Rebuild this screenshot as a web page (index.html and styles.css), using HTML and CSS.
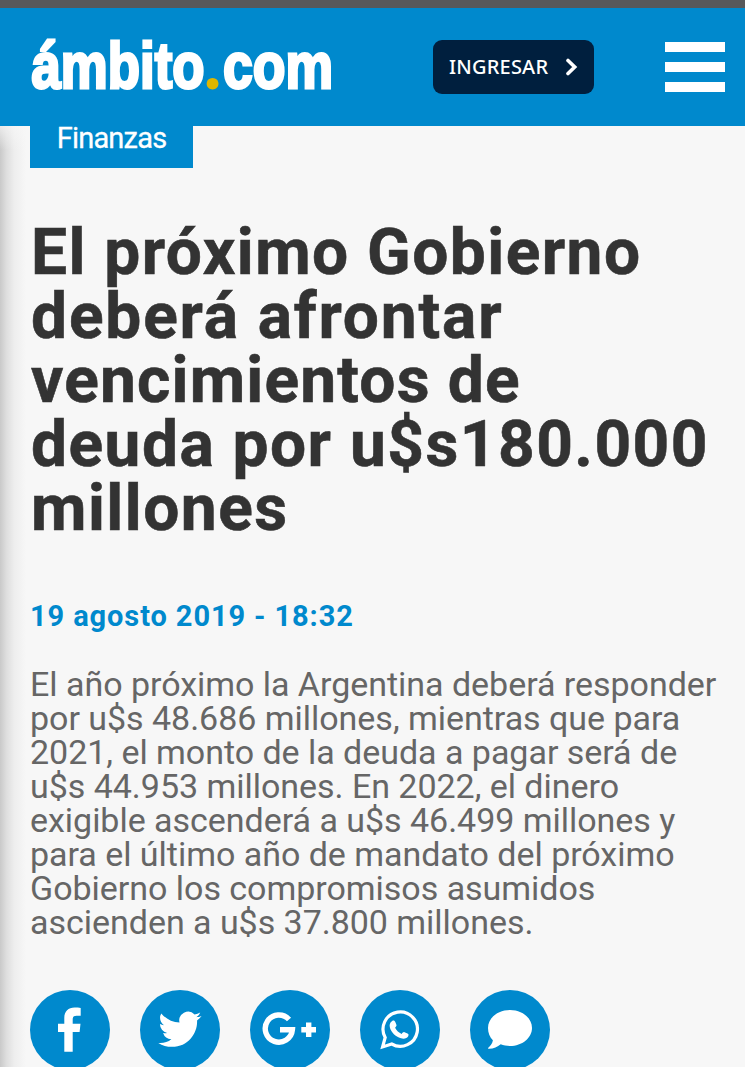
FILE: index.html
```html
<!DOCTYPE html>
<html lang="es">
<head>
<meta charset="utf-8">
<title>ámbito.com</title>
<link rel="stylesheet" href="styles.css">
</head>
<body>
<div class="page">
<header class="header">
  <svg class="logo" width="310" height="94" viewBox="0 0 310 94" role="img" aria-label="ámbito.com">
    <text class="logo-word" x="1.500" y="63.800" textLength="173" lengthAdjust="spacingAndGlyphs">ámbito</text>
    <text class="logo-dot" x="174" y="65">.</text>
    <text class="logo-word" x="193" y="63.800" textLength="110" lengthAdjust="spacingAndGlyphs">com</text>
  </svg>
  <button class="login"><span class="login-text">INGRESAR</span>
    <svg width="12" height="18" viewBox="0 0 12 18"><path d="M2 2.500 8.700 9 2 15.500" fill="none" stroke="#fff" stroke-width="3.600" stroke-linecap="round"/></svg>
  </button>
  <div class="menu"><span></span><span></span><span></span></div>
</header>
<main class="article">
  <div class="edge"></div>
  <a class="tag"><span>Finanzas</span></a>
  <h1 class="title">
    <span class="l1">El próximo Gobierno</span>
    <span class="l2">deberá afrontar</span>
    <span class="l3">vencimientos de</span>
    <span class="l4">deuda por u$s180.000</span>
    <span class="l5">millones</span>
  </h1>
  <div class="date"><span>19 agosto 2019 - 18:32</span></div>
  <p class="summary">El año próximo la Argentina deberá responder<br>por u$s 48.686 millones, mientras que para<br>2021, el monto de la deuda a pagar será de<br>u$s 44.953 millones. En 2022, el dinero<br>exigible ascenderá a u$s 46.499 millones y<br>para el último año de mandato del próximo<br>Gobierno los compromisos asumidos<br>ascienden a u$s 37.800 millones.</p>
  <div class="share">
    <svg class="icon" viewBox="0 0 80 80"><path d="M50.7 17.9v7.8h-4.2c-3 0-3.8 1.4-3.8 3.9v4.1h7.8L49.6 42h-6.9v19.7h-8.4V42H28v-8.3h6.3v-5.6c0-6.8 4-10.600 10.300-10.600 2.300 0 4.300.1 6.100.4z"/></svg>
    <svg class="icon" viewBox="0 0 80 80"><path transform="translate(18.3 17.7) scale(1.8)" d="M23.953 4.57a10 10 0 01-2.825.775 4.958 4.958 0 002.163-2.723c-.951.555-2.005.959-3.127 1.184a4.92 4.92 0 00-8.384 4.482C7.69 8.095 4.067 6.13 1.64 3.162a4.822 4.822 0 00-.666 2.475c0 1.71.87 3.213 2.188 4.096a4.904 4.904 0 01-2.228-.616v.06a4.923 4.923 0 003.946 4.827 4.996 4.996 0 01-2.212.085 4.936 4.936 0 004.604 3.417 9.867 9.867 0 01-6.102 2.105c-.39 0-.779-.023-1.17-.067a13.995 13.995 0 007.557 2.209c9.053 0 13.998-7.496 13.998-13.985 0-.21 0-.42-.015-.63A9.935 9.935 0 0024 4.59z"/></svg>
    <svg class="icon" viewBox="0 0 80 80"><path class="line" stroke-width="5.4" d="M39 29.500A13.600 13.600 0 1 0 42.400 39.800H30M51.300 39.800H66M58.700 32.500v14.600"/></svg>
    <svg class="icon" viewBox="0 0 80 80"><path class="line" stroke-width="3.2" d="M22.6 56.9l2.600-9.500A17.200 17.200 0 1 1 31.700 54z"/><path d="M32.2 31c1.400-.9 2.500-.3 3.200 1.200l1 2.500c.4 1-.1 1.600-1.300 3 1.500 3 3.600 4.900 6.600 6.200 1-1.300 1.800-2.200 2.800-1.700l3 1.400c1.200.6 1.300 1.300.7 2.600-1 2.200-4.500 3-7.200 2-5.800-2-9.400-5.700-11-10.300-.9-2.700-.2-5.700 2.200-6.900z"/></svg>
    <svg class="icon" viewBox="0 0 80 80"><path d="M40 20c12.200 0 22 8 22 18s-9.800 18-22 18c-3.300 0-6.500-.6-9.300-1.700-3.200 2.700-7.600 4.700-12.200 4.500-.6 0-.7-.7-.2-1.100 2.600-2 4-4.400 4.600-7.400C19.700 47 18 42.700 18 38c0-10 9.800-18 22-18z"/></svg>
  </div>
</main>
</div>
</body>
</html>
```
FILE: styles.css
```css
body { margin: 0; background: #f7f7f7; font-family: Roboto, "Noto Sans", sans-serif; }
.page { height: 1067px; overflow: hidden; }
.header { box-sizing: border-box; height: 126px; border-top: 8px solid #58585a; background: #0089cd; display: flex; align-items: flex-start; padding: 16px 20px 0 30px; }
.logo { flex: none; margin-right: 93px; overflow: visible; }
.logo-word { font-family: "Liberation Sans", Arial, sans-serif; font-weight: 700; font-size: 65px; fill: #fff; stroke: #fff; stroke-width: 3; }
.logo-dot { font-family: Lato, sans-serif; font-weight: 900; font-size: 72px; fill: #dfb600; }
.login { box-sizing: border-box; width: 161px; height: 54px; margin-top: 16px; padding: 0 16px; border: 0; border-radius: 9px; background: #001f3e; color: #fff; display: flex; align-items: center; justify-content: space-between; font: 500 20px/54px "Noto Sans", sans-serif; letter-spacing: .2px; }
.login-text { white-space: nowrap; }
.menu { margin: 18px 0 0 auto; width: 60px; display: grid; gap: 10px; }
.menu span { height: 10px; background: #fff; }
.article { position: relative; height: 941px; padding: 0 0 0 30px; }
.edge { position: absolute; left: 0; top: 0; width: 26px; height: 941px; background: linear-gradient(180deg, rgba(247,247,247,.7), rgba(247,247,247,0) 24px), linear-gradient(90deg, #c9c9c9, #dedede 25%, #eee 55%, #f7f7f7); }
.tag { display: flex; width: 163px; height: 42px; background: #0089cd; color: #fff; justify-content: center; font: 400 29px/24px Roboto, sans-serif; letter-spacing: -.8px; -webkit-text-stroke: .3px #fff; }
.title { margin: 53px 0 0 1px; font: 700 64px/64px Roboto, sans-serif; color: #333; -webkit-text-stroke: .6px #333; }
.title span { display: block; width: max-content; white-space: nowrap; letter-spacing: 1.48px; }
.title .l2 { letter-spacing: 1.85px; }
.title .l3 { letter-spacing: 1.2px; }
.date { margin-top: 55px; font: 700 29px/40px Roboto, sans-serif; letter-spacing: .9px; color: #0089cd; }
.summary { margin: 31px 0 0; font-size: 34px; line-height: 34px; letter-spacing: -.03px; color: #666; white-space: nowrap; }
.share { display: flex; gap: 30px; margin-top: 51px; }
.icon { width: 80px; height: 80px; border-radius: 50%; background: #0089cd; fill: #fff; }
.line { fill: none; stroke: #fff; }
```
